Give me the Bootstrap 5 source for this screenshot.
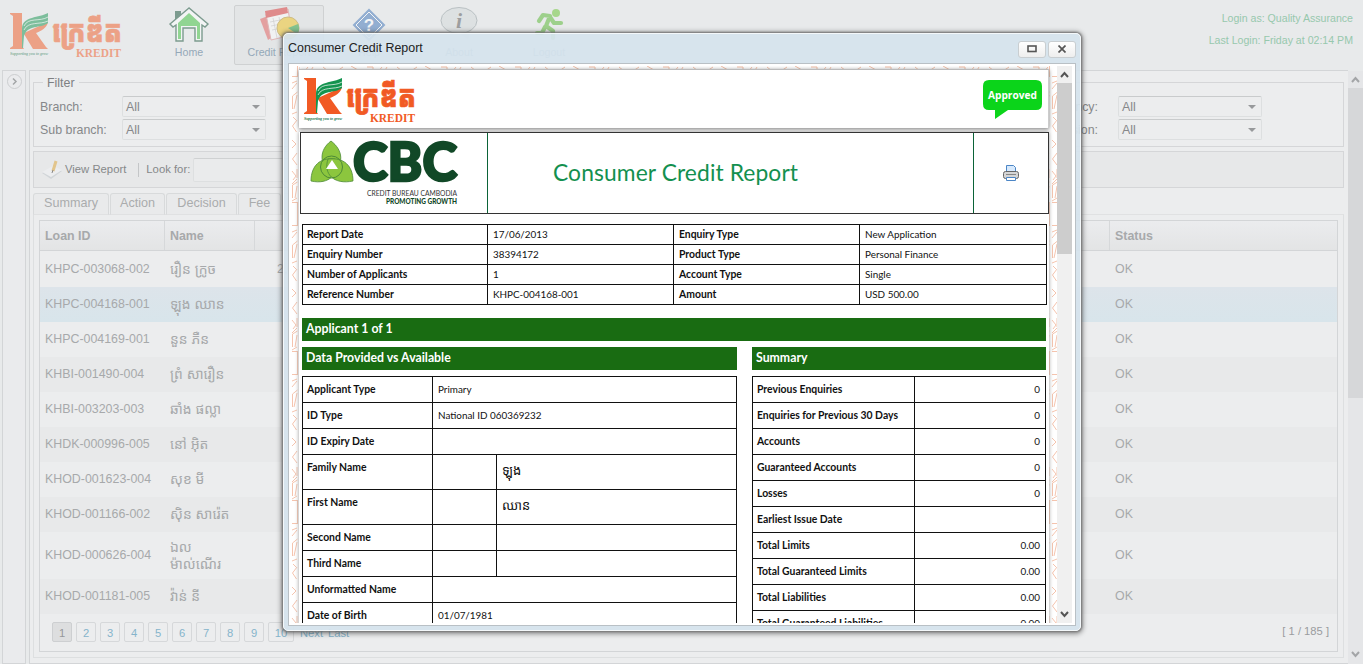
<!DOCTYPE html>
<html lang="en">
<head>
<meta charset="utf-8">
<title>Kredit - Credit Report</title>
<link rel="stylesheet" href="https://cdn.jsdelivr.net/npm/bootstrap@5.3.0/dist/css/bootstrap.min.css">
<style>
body{width:1363px;height:664px;overflow:hidden;background:#e8eaeb;font-family:"Liberation Sans","Noto Sans Khmer","Noto Sans",sans-serif;font-size:12.4px;line-height:1.2;color:#86888a;position:relative}
svg{display:block;flex:none}
.topbar{height:70px}
.logo-main{margin:10px 0 0 9px;width:135px;opacity:.5}
.toolbtn{width:90px;height:60px;margin-top:5px;font-size:10.6px;color:#94a8b8;padding-top:2px;position:relative}
.toolbtn svg{margin:0 auto;opacity:.5}
.toolbtn span{position:absolute;left:0;right:0;top:41px;text-align:center}
.toolbtn.current{border:1px solid #cfd1d2;border-radius:2px;background:#e3e5e6;padding-top:1px}
.toolbtn.current span{top:40px}
.login{font-size:10.6px;color:#97c8ad;line-height:22px;margin:7px 10px 0 auto;text-align:right}
.rail{width:24px;margin:0 3px 0 2px;border:1px solid #d3d5d7;background:#eaebed;padding:3px 0 0 4px}
.mainpane{border:1px solid #d3d5d7;border-right:0;background:#ecedee;padding:11px 4px 0 3px;width:1319px}
.filterbox{height:65px;border:1px solid #d5d6d8;position:relative}
.legend-t{position:absolute;left:9px;top:-7px;background:#ecedee;padding:0 4px;font-size:12.4px;line-height:14px;color:#7e8082}
.fgrid{display:grid;grid-template-columns:82px 144px 1fr 57px 20px 144px 81px;grid-auto-rows:23px;padding:13px 0 0 6px;align-items:start}
.fgrid>div{line-height:23px;white-space:nowrap}
.pick{height:21px;border:1px solid #dddfe0;border-top-color:#c9cbcc;border-radius:2px;padding-left:3px;line-height:20px!important;position:relative}
.pick:after{content:"";position:absolute;right:5px;top:8px;border:4px solid transparent;border-top-color:#97999b}
.actions{height:37px;border:1px solid #d5d6d8;background:#e7e8e9;margin-top:4px;padding-left:7px;font-size:11.3px}
.actions .vsep{width:1px;height:14px;background:#c4c6c8;margin:0 7px 0 12px}
.actions .find{width:640px;height:24px;border:1px solid #dddfe0;border-top-color:#cfd1d2;background:#eaebec;margin-left:3px;border-radius:2px}
.tabrow{margin-top:5px;height:22px;color:#aaacad;gap:1px}
.tabrow div{height:22px;border:1px solid #d8dadb;border-bottom-color:#e0e1e2;border-radius:3px 3px 0 0;text-align:center;line-height:19px;background:#e9eaeb;font-size:12.6px}
.tabbody{height:444px;border:1px solid #dddfe0;border-top-color:#e0e1e2;margin-top:-1px;padding:5px}
.loans{height:432px;border:1px solid #d3d5d7;color:#a7a9ab}
.lrow{display:grid;grid-template-columns:125px 90px 855px 228px;height:35px;align-items:center}
.lrow>div{padding-left:5px}
.lhead{height:30px;border-bottom:1px solid #d3d5d7;background:linear-gradient(#ebecee,#e3e4e5);font-weight:700}
.lhead>div{height:29px;line-height:31px;border-right:1px solid #d6d8da}
.lhead>div:last-child{border:0}
.odd{background:#e8e9ea}.chosen{background:linear-gradient(#dde4ea,#d8e5eb)}
.tall{height:47px}
.km{font-family:"Liberation Sans","Noto Sans Khmer","Khmer OS",sans-serif;line-height:17px}
.lrow .km{font-size:13.9px}
.pages{padding:8px 8px 0 12px;gap:4px;font-size:11.2px;color:#85b4cb}
.pages .pg{width:20px;height:20px;border:1px solid #d6d8da;border-radius:2px;text-align:center;line-height:20px}
.pages .on{background:#dddedf;border-color:#cdcfd1;color:#95979a}
.vbar{width:15px;background:#e5e6e8;margin-top:1px}
.vthumb{height:310px;background:#d6d7d9}
.dialog-x{position:absolute;left:283px;top:33px;width:798px;height:598px;border:1px solid #f4f8fa;border-radius:5px;box-shadow:0 0 2px 1px #777,0 1px 5px 2px rgba(0,0,0,.4);background:rgba(213,227,237,.93);padding:0 4px 4px}
.dtitle{height:29px;color:#222;font-size:12.45px;gap:2px}
.dtitle .wb{width:28px;height:17px;border:1px solid #c9ced1;border-radius:3px;background:linear-gradient(#fff,#eee);margin-top:1px}
.dbody{height:563px;border:1px solid #b9c0c5;background:#fff;padding:2px}
.frame-in{height:557px;width:766px;overflow:hidden;position:relative;font-family:Lato,"Noto Sans Khmer",sans-serif;font-size:9.9px;color:#111}
.kbach{position:absolute;left:0;top:0}
.sheet{position:relative;margin-left:8px;width:750px}
.banner{margin-top:3px;height:59px;background:#fff;border-top:1px solid #bbb;border-right:1px solid #ccc;padding:5px 6px 0 4px;box-shadow:0 1px 4px #777}
.paper{background:#fff;box-shadow:0 0 4px #999;margin-top:4px;padding-left:1px;height:520px}
.cbcrow{height:82px;border:1px solid #333;width:749px;background:#fff}
.cbcrow .c1{width:186px;padding:6px 0 0 9px}
.cbcrow .c2{width:487px;border:1px solid #0b6338;border-width:0 1px;padding-left:65px}
.cbcrow .c3{width:74px}
.rt{border-collapse:collapse;table-layout:fixed;background:#fff;border:1px solid #666}
.rt td{border:1px solid #111;padding:0 5px;vertical-align:top}
.rt td:first-child{font-weight:700;font-size:10.4px;padding-left:4px}
.t1{width:744px;margin:10px 0 0 2px}
.t1 td{height:20px;line-height:19px}.t1 td:nth-child(3){font-weight:700;font-size:10.4px}
.bar{height:23px;background:#196c12;color:#fff;font-weight:700;font-size:12.3px;line-height:22px;padding-left:4px}
.t2 td{height:26px;line-height:25px}
.t2 .nm td{height:35px}
.t2 .nm .km{font-size:13px;line-height:31px}
</style>
</head>
<body>
<svg width="0" height="0" class="position-absolute">
<defs>
<g id="kredit">
<path fill="#f15a24" d="M0 3h12v33l2 3H0v-1l3-2V6L0 4zM14 23L38 12c-1 6-7 9-12 11l10 14 2 2H23l-9-15z"/>
<path fill="#14944f" d="M12 38V18C13 6 29 8 38 3v10c-8 6-20 1-24 13l-1 12z"/>
<path stroke="#fff" stroke-width=".7" fill="none" d="M14 16c4-9 16-4 24-9M14 20c4-9 16-5 24-9"/>
<text x="0" y="44.500" font-family="Liberation Serif" font-style="italic" font-weight="700" font-size="4.600" textLength="38" lengthAdjust="spacingAndGlyphs" fill="#14764a">Supporting you to grow</text>
<text x="42" y="32" font-family="'Noto Sans Khmer','Khmer OS Muol',sans-serif" font-weight="900" font-size="31" textLength="70" lengthAdjust="spacingAndGlyphs" fill="#f15a24" stroke="#f15a24" stroke-width=".7">ក្រេឌីត</text>
<text x="66" y="46.500" font-family="Liberation Serif" font-weight="700" font-size="12" textLength="45" lengthAdjust="spacingAndGlyphs" fill="#f15a24">KREDIT</text>
</g>
<pattern id="orn" width="8" height="149" patternUnits="userSpaceOnUse" y="-13">
<g fill="none" stroke="#f5c4ae" stroke-width="1"><path d="M1 .5h5M6.500 0v24M1 23.500h5M1 30l5-2M1 36l5-6M1.500 56V43l5-4M3 56l3-14M1 61l5-2M2 64l3 3M6 67L1.500 73l4 6M1 87l4 4-4 4M6 100l-4.500 6 4.500 6M1 118l4 5-3 4M6 116v9M1 131l5-5M1.500 145v-13l5-3M4 145l2-12M1 148l5-3"/></g>
</pattern>
<pattern id="ornTop" width="74" height="8" patternUnits="userSpaceOnUse"><path d="M2 1h6v3M17 1l-4 5M22 1l-3 5M32 1l5 4M52 1l-6 4M60 0l7 4" fill="none" stroke="#f3bda4"/></pattern>
</defs>
</svg>

<header class="topbar d-flex">
<svg class="logo-main" width="135" height="54"><use href="#kredit" x="1" y="0"/></svg>
<div class="toolbtn"><svg width="42" height="36" viewBox="0 0 42 36"><path fill="#134f35" d="M7 4h6v8l-6 5z"/><path fill="#fff" stroke="#134f35" stroke-width="1.400" d="M21 1L2 17l3 3 3-2v16h7V21h12v13h7V18l3 2 3-3z"/><path fill="#3cc13c" d="M21 6L10 16v16h3V19h16v13h3V16z"/></svg><span>Home</span></div>
<div class="toolbtn current"><svg width="44" height="36" viewBox="0 0 44 36"><path fill="#e45d5d" d="M3 12l8-3 6 20-6 4z"/><path fill="#fff" stroke="#d88" d="M9 7l22-5 4 26-21 5z"/><path fill="#dc3434" d="M8 4l22-4 1 6L9 11z"/><path stroke="#bbb" stroke-width=".7" d="M13 15l20-4M14 19l20-4M15 23l20-4M16 11l4 20M22 10l4 19"/><circle cx="31" cy="21" r="11" fill="#f2c51e" stroke="#b99325"/><path fill="#27a03b" d="M31 21l10-4c2 4 1 8-1 10z"/></svg><span>Credit Report</span></div>
<div class="toolbtn"><svg width="36" height="36" viewBox="0 0 36 36"><path fill="#3f74b8" stroke="#3f74b8" stroke-width="2" d="M18 3l15 15-15 15L3 18z"/><path fill="none" stroke="#fff" d="M18 5l13 13-13 13L5 18z"/><text x="18" y="24" text-anchor="middle" font-size="17" font-weight="700" fill="#fff">?</text></svg><span>Help</span></div>
<div class="toolbtn"><svg width="40" height="36" viewBox="0 0 40 36"><ellipse cx="20" cy="13.500" rx="18" ry="13" fill="#d3dadb" stroke="#8c989c"/><path fill="#cfd6d8" d="M21 27l10-2-2 7z"/><text x="20" y="21" text-anchor="middle" font-family="Liberation Serif" font-style="italic" font-size="22" font-weight="700" fill="#555">i</text></svg><span>About</span></div>
<div class="toolbtn"><svg width="36" height="36" viewBox="0 0 36 36"><g fill="none" stroke="#55b82e" stroke-width="4.200" stroke-linecap="round" stroke-linejoin="round"><path d="M8 14l4-6 7 1-4 10 7 5v7M19 10l4 6h7M14 20l-3 6H6"/></g><circle cx="25" cy="6" r="4" fill="#67c62e"/></svg><span>Logout</span></div>
<div class="login">Login as: Quality Assurance<br>Last Login: Friday at 02:14 PM</div>
</header>

<div class="d-flex" style="height:594px">
<aside class="rail"><svg width="15" height="15"><circle cx="7.500" cy="7.500" r="7" fill="none" stroke="#cbcdcf"/><path d="M6 4.500l3 3-3 3" fill="none" stroke="#a4a6a8" stroke-width="1.500"/></svg></aside>
<main class="mainpane">
<div class="filterbox"><div class="legend-t">Filter</div>
<div class="fgrid">
<div>Branch:</div><div class="pick">All</div><div></div><div class="text-end">Currency:</div><div></div><div class="pick">All</div><div></div>
<div>Sub branch:</div><div class="pick">All</div><div></div><div class="text-end">Decision:</div><div></div><div class="pick">All</div><div></div>
</div></div>
<div class="actions d-flex align-items-center">
<svg width="22" height="22" viewBox="0 0 22 22"><path fill="#d1d5d8" d="M1 14l11-6 9 4-11 8z"/><path fill="#ecedef" d="M1 13l11-6 9 4-11 7z"/><path stroke="#e2c58c" stroke-width="3" d="M15 2l-3 10"/><path stroke="#888" d="M12 11l-1 3"/></svg>
<span style="margin-left:2px">View Report</span><span class="vsep"></span><span>Look for:</span><div class="find"></div></div>
<div class="tabrow d-flex"><div style="width:76px">Summary</div><div style="width:55px">Action</div><div style="width:71px">Decision</div><div style="width:43px">Fee</div><div style="width:70px"></div></div>
<div class="tabbody"><div class="loans">
<div class="lrow lhead"><div>Loan ID</div><div>Name</div><div></div><div>Status</div></div>
<div class="lrow" style="height:36px"><div>KHPC-003068-002</div><div class="km">រឿន ក្រូច</div><div style="padding-left:22px">2,000.00</div><div>OK</div></div>
<div class="lrow chosen"><div>KHPC-004168-001</div><div class="km">ឡុង ឈាន</div><div></div><div>OK</div></div>
<div class="lrow"><div>KHPC-004169-001</div><div class="km">នួន ភឺន</div><div></div><div>OK</div></div>
<div class="lrow odd"><div>KHBI-001490-004</div><div class="km">ព្រំ សារឿន</div><div></div><div>OK</div></div>
<div class="lrow"><div>KHBI-003203-003</div><div class="km">ឆាំង ផល្លា</div><div></div><div>OK</div></div>
<div class="lrow odd"><div>KHDK-000996-005</div><div class="km">នៅ អ៊ិត</div><div></div><div>OK</div></div>
<div class="lrow"><div>KHOD-001623-004</div><div class="km">សុខ មី</div><div></div><div>OK</div></div>
<div class="lrow odd"><div>KHOD-001166-002</div><div class="km">ស៊ិន សារ៉េត</div><div></div><div>OK</div></div>
<div class="lrow tall"><div>KHOD-000626-004</div><div class="km">ឯល<br>ម៉ាល់ណើរ</div><div></div><div>OK</div></div>
<div class="lrow odd"><div>KHOD-001181-005</div><div class="km">វ៉ាន់ នី</div><div></div><div>OK</div></div>
<div class="pages d-flex"><div class="pg on">1</div><div class="pg">2</div><div class="pg">3</div><div class="pg">4</div><div class="pg">5</div><div class="pg">6</div><div class="pg">7</div><div class="pg">8</div><div class="pg">9</div><div class="pg" style="width:26px">10</div><span style="margin:5px 0 0 2px">Next</span><span style="margin:5px 0 0 1px">Last</span><span class="ms-auto" style="color:#9a9c9e;margin-top:3px">[ 1 / 185 ]</span></div>
</div></div>
</main>
<div class="vbar d-flex flex-column"><svg width="15" height="17"><path d="M4 11l3.500-4 3.500 4" fill="none" stroke="#a3a5a7" stroke-width="2"/></svg><div class="vthumb"></div><svg class="mt-auto" width="15" height="17"><path d="M4 5l3.500 4L11 5" fill="none" stroke="#a3a5a7" stroke-width="2"/></svg></div>
</div>

<section class="dialog-x">
<div class="dtitle d-flex align-items-center"><span class="me-auto">Consumer Credit Report</span>
<div class="wb d-flex align-items-center justify-content-center"><svg width="10" height="8"><rect x="1" y="1" width="8" height="5.500" fill="none" stroke="#555" stroke-width="1.600"/></svg></div>
<div class="wb d-flex align-items-center justify-content-center"><svg width="8" height="8"><path d="M.5.5l7 7M7.500.500l-7 7" stroke="#555" stroke-width="1.700"/></svg></div></div>
<div class="dbody d-flex">
<div class="frame-in">
<svg class="kbach" width="766" height="557"><rect width="8" height="557" fill="url(#orn)"/><rect x="758" width="8" height="557" fill="url(#orn)"/><rect x="8" width="750" height="3" fill="url(#ornTop)"/></svg>
<div class="sheet">
<div class="banner d-flex"><svg width="120" height="52"><use href="#kredit" x="1" y="0"/></svg>
<svg class="ms-auto" width="59" height="42" style="margin-top:5px"><path fill="#0bd41a" d="M6 0h47q6 0 6 6v18q0 6-6 6H25l-13 9v-9H6q-6 0-6-6V6q0-6 6-6z"/><text x="5" y="19" font-family="Open Sans" font-weight="700" font-size="11" textLength="49" lengthAdjust="spacingAndGlyphs" fill="#fff">Approved</text></svg></div>
<div class="paper">
<div class="cbcrow d-flex">
<div class="c1"><svg width="160" height="72" viewBox="0 0 160 72">
<g fill="#8cc63e" stroke="#4d8a37" stroke-width=".8"><path d="M21 2C9 11 9 25 21 36 35 25 33 11 21 2z"/><path d="M1 42C1 27 10 18 25 20 30 35 19 46 1 42z"/><path d="M43 42C43 27 34 18 18 20 13 35 24 46 43 42z"/></g><circle cx="21.500" cy="28" r="11" fill="none" stroke="#4d8a37"/><path fill="#fff" d="M22 21l6 9H16z"/>
<text x="43" y="42" font-family="Lato" font-weight="900" font-size="54" textLength="104" lengthAdjust="spacingAndGlyphs" fill="#114827" stroke="#114827" stroke-width="2.500">CBC</text>
<text x="57" y="57" font-family="Lato" font-size="7.500" textLength="90" lengthAdjust="spacingAndGlyphs" fill="#333">CREDIT BUREAU CAMBODIA</text><text x="76" y="65" font-family="Lato" font-weight="900" font-size="7" textLength="71" lengthAdjust="spacingAndGlyphs" fill="#114827">PROMOTING GROWTH</text></svg></div>
<div class="c2 d-flex align-items-center"><svg width="250" height="36"><text x="0" y="26" font-family="Lato" font-size="22.800" textLength="245" fill="#13904f">Consumer Credit Report</text></svg></div>
<div class="c3 d-flex align-items-center justify-content-center"><svg width="16" height="16"><path fill="#d7e9fc" stroke="#4c86c6" d="M3.500 8V.500h7l2 2V8z"/><rect x=".500" y="6.500" width="15" height="7" rx="2" fill="#d5d5d5" stroke="#666"/><path stroke="#888" d="M3 9.500h10"/><path fill="#fff" stroke="#4c86c6" d="M3.500 12.500h9v3h-9z"/></svg></div></div>
<table class="rt t1"><colgroup><col style="width:185px"><col style="width:186px"><col style="width:186px"><col style="width:187px"></colgroup>
<tr><td>Report Date</td><td>17/06/2013</td><td>Enquiry Type</td><td>New Application</td></tr>
<tr><td>Enquiry Number</td><td>38394172</td><td>Product Type</td><td>Personal Finance</td></tr>
<tr><td>Number of Applicants</td><td>1</td><td>Account Type</td><td>Single</td></tr>
<tr><td>Reference Number</td><td>KHPC-004168-001</td><td>Amount</td><td>USD 500.00</td></tr></table>
<div class="bar" style="margin:13px 3px 6px 2px">Applicant 1 of 1</div>
<div class="d-flex" style="margin-left:2px;gap:15px">
<div style="width:435px"><div class="bar" style="margin-bottom:6px">Data Provided vs Available</div>
<table class="rt t2 w-100"><colgroup><col style="width:130px"><col style="width:64px"><col></colgroup>
<tr><td>Applicant Type</td><td colspan="2">Primary</td></tr><tr><td>ID Type</td><td colspan="2">National ID 060369232</td></tr><tr><td>ID Expiry Date</td><td colspan="2"></td></tr>
<tr class="nm"><td>Family Name</td><td></td><td class="km">ឡុង</td></tr><tr class="nm"><td>First Name</td><td></td><td class="km">ឈាន</td></tr>
<tr><td>Second Name</td><td></td><td></td></tr><tr><td>Third Name</td><td></td><td></td></tr><tr><td>Unformatted Name</td><td colspan="2"></td></tr><tr><td>Date of Birth</td><td colspan="2">01/07/1981</td></tr></table></div>
<div style="width:294px"><div class="bar" style="margin-bottom:6px">Summary</div>
<table class="rt t2 w-100 text-end"><colgroup><col style="width:162px"><col></colgroup>
<tr><td class="text-start">Previous Enquiries</td><td>0</td></tr><tr><td class="text-start">Enquiries for Previous 30 Days</td><td>0</td></tr><tr><td class="text-start">Accounts</td><td>0</td></tr><tr><td class="text-start">Guaranteed Accounts</td><td>0</td></tr><tr><td class="text-start">Losses</td><td>0</td></tr><tr><td class="text-start">Earliest Issue Date</td><td></td></tr><tr><td class="text-start">Total Limits</td><td>0.00</td></tr><tr><td class="text-start">Total Guaranteed Limits</td><td>0.00</td></tr><tr><td class="text-start">Total Liabilities</td><td>0.00</td></tr><tr><td class="text-start">Total Guaranteed Liabilities</td><td>0.00</td></tr></table></div>
</div></div></div></div>
<div class="d-flex flex-column" style="width:15px;background:#f0f0f0"><svg width="15" height="17"><path d="M4 11l3.500-4 3.500 4" fill="none" stroke="#555" stroke-width="2"/></svg><div style="height:171px;background:#cdcdcd"></div><svg class="mt-auto" width="15" height="17"><path d="M4 6l3.500 4L11 6" fill="none" stroke="#555" stroke-width="2"/></svg></div>
</div></section>
<script src="https://cdn.jsdelivr.net/npm/bootstrap@5.3.0/dist/js/bootstrap.bundle.min.js"></script>
</body>
</html>
